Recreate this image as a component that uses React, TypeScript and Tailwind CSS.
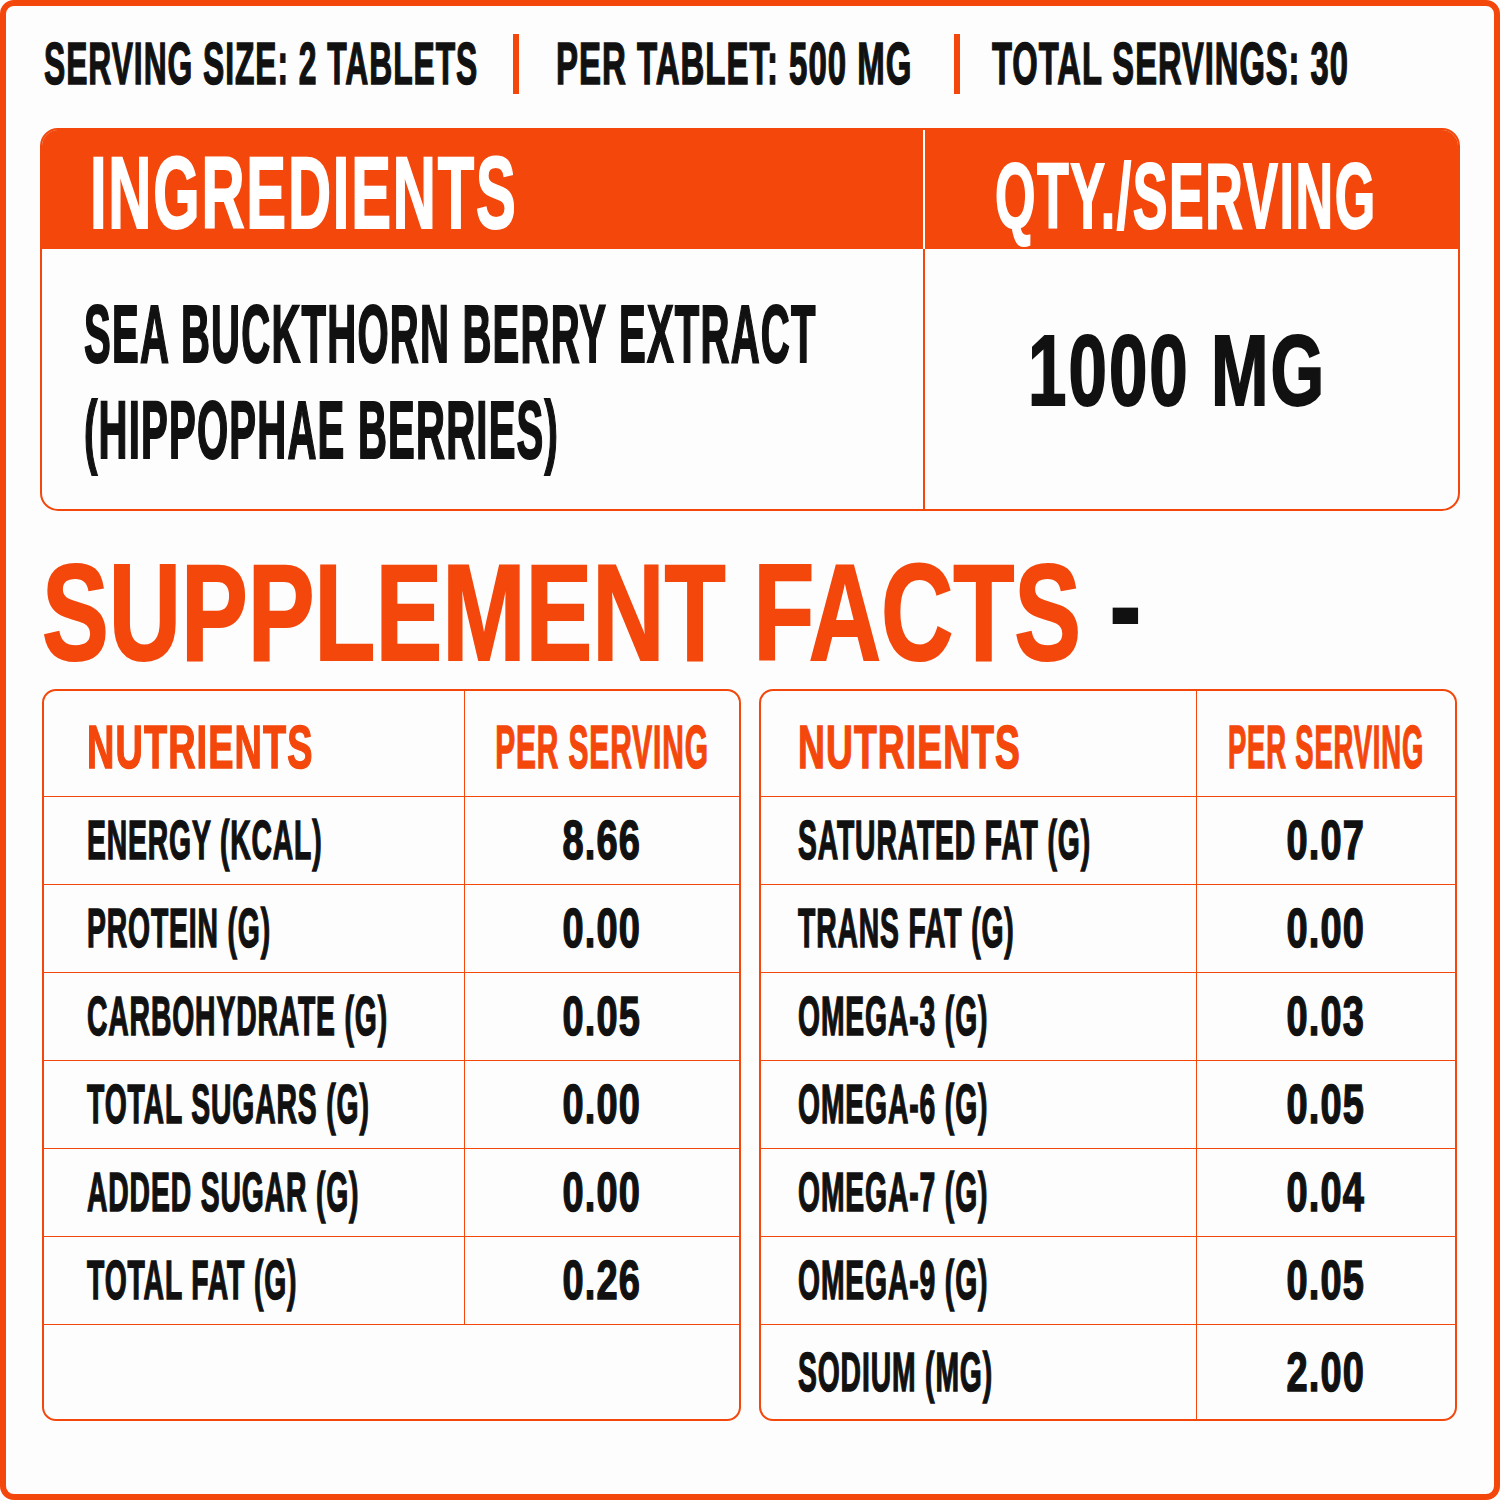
import React from 'react';

type Row = [string, string];

const leftRows: Row[] = [
  ['ENERGY (KCAL)', '8.66'],
  ['PROTEIN (G)', '0.00'],
  ['CARBOHYDRATE (G)', '0.05'],
  ['TOTAL SUGARS (G)', '0.00'],
  ['ADDED SUGAR (G)', '0.00'],
  ['TOTAL FAT (G)', '0.26'],
];

const rightRows: Row[] = [
  ['SATURATED FAT (G)', '0.07'],
  ['TRANS FAT (G)', '0.00'],
  ['OMEGA-3 (G)', '0.03'],
  ['OMEGA-6 (G)', '0.05'],
  ['OMEGA-7 (G)', '0.04'],
  ['OMEGA-9 (G)', '0.05'],
  ['SODIUM (MG)', '2.00'],
];

// condensed text: Liberation Sans squeezed on the x axis
const Sq: React.FC<{ className: string; children: React.ReactNode }> = ({ className, children }) => (
  <span className={`inline-block whitespace-nowrap leading-none tracking-[0.03em] ${className}`}>{children}</span>
);

interface TableProps {
  rows: Row[];
  cols: string;
  pad: string;
  nutScale: string;
  perScale: string;
}

const NutrientTable: React.FC<TableProps> = ({ rows, cols, pad, nutScale, perScale }) => {
  return (
    <div className="flex h-[732px] flex-col overflow-hidden rounded-[14px] border-2 border-[#f4470c]">
      <div className={`grid h-[106px] shrink-0 border-b-[1.5px] border-[#f4470c] ${cols}`}>
        <div className={`flex items-center border-r-[1.5px] border-[#f4470c] pt-[8px] ${pad}`}>
          <Sq className={`origin-left text-[61px] text-[#f4470c] [-webkit-text-stroke:1.5px_#f4470c] ${nutScale}`}>NUTRIENTS</Sq>
        </div>
        <div className="flex items-center justify-center pt-[8px]">
          <Sq className={`origin-center text-[61px] text-[#f4470c] [-webkit-text-stroke:1.5px_#f4470c] ${perScale}`}>PER SERVING</Sq>
        </div>
      </div>
      {rows.map(([label, value], i) => (
        <div
          key={label}
          className={`grid shrink-0 ${cols} ${i < 6 ? 'h-[88px] border-b-[1.5px] border-[#f4470c]' : 'flex-1'}`}
        >
          <div className={`flex items-center border-r-[1.5px] border-[#f4470c] ${pad}`}>
            <Sq className="origin-left scale-x-[0.515] text-[55px] text-[#111] [-webkit-text-stroke:1.5px_#111]">{label}</Sq>
          </div>
          <div className="flex items-center justify-center">
            <Sq className="origin-center scale-x-[0.69] text-[55px] text-[#111] [-webkit-text-stroke:1.5px_#111]">{value}</Sq>
          </div>
        </div>
      ))}
      {rows.length < 7 && <div className="flex-1" />}
    </div>
  );
};

const App: React.FC = () => {
  return (
    <div className="h-[1500px] w-[1500px] overflow-hidden bg-white">
      <div className="flex h-[1500px] w-[1500px] flex-col overflow-hidden rounded-[14px] border-[6px] border-[#f4470c] bg-[#fdfdfd] px-[34px] pt-[28px] font-['Liberation_Sans',Arial,sans-serif] font-bold">
        {/* serving info */}
        <div className="flex h-[60px] shrink-0 items-center pl-[4px] text-[#111] [-webkit-text-stroke:1.5px_#111]">
          <div className="w-[437px] shrink-0">
            <Sq className="origin-left scale-x-[0.53] text-[60px]">SERVING SIZE: 2 TABLETS</Sq>
          </div>
          <div className="ml-[32px] h-[60px] w-[6px] shrink-0 bg-[#f4470c]" />
          <div className="ml-[37px] w-[364px] shrink-0">
            <Sq className="origin-left scale-x-[0.55] text-[60px]">PER TABLET: 500 MG</Sq>
          </div>
          <div className="ml-[34px] h-[60px] w-[6px] shrink-0 bg-[#f4470c]" />
          <div className="ml-[32px] w-[364px] shrink-0">
            <Sq className="origin-left scale-x-[0.545] text-[60px]">TOTAL SERVINGS: 30</Sq>
          </div>
        </div>

        {/* ingredients */}
        <div className="mt-[34px] shrink-0 overflow-hidden rounded-[18px] border-2 border-[#f4470c]">
          <div className="grid h-[119px] grid-cols-[883px_minmax(0,1fr)] bg-[#f4470c] text-white [-webkit-text-stroke:2px_white]">
            <div className="overflow-hidden border-r-2 border-white pl-[48px] pt-[12px]">
              <Sq className="origin-left scale-x-[0.585] text-[102px]">INGREDIENTS</Sq>
            </div>
            <div className="flex justify-center pr-[12px] pt-[20px]">
              <Sq className="origin-center scale-x-[0.565] text-[92px]">QTY./SERVING</Sq>
            </div>
          </div>
          <div className="grid h-[260px] grid-cols-[883px_minmax(0,1fr)] text-[#111] [-webkit-text-stroke:2px_#111]">
            <div className="overflow-hidden border-r-2 border-[#f4470c] pl-[42px] pt-[37px]">
              <div className="origin-left scale-x-[0.495] whitespace-nowrap text-[81px] leading-[96px] tracking-[0.03em]">
                SEA BUCKTHORN BERRY EXTRACT
                <br />
                (HIPPOPHAE BERRIES)
              </div>
            </div>
            <div className="flex justify-center pr-[28px] pt-[71px]">
              <Sq className="origin-center scale-x-[0.69] text-[100px]">1000 MG</Sq>
            </div>
          </div>
        </div>

        {/* title */}
        <div className="mt-[33px] h-[137px] shrink-0 pl-[2px]">
          <span className="inline-block origin-left scale-x-[0.73] whitespace-nowrap text-[137px] leading-none text-[#f4470c] [-webkit-text-stroke:2px_#f4470c]">
            SUPPLEMENT FACTS{' '}
            <span className="inline-block -translate-y-[9px] text-[#111] [-webkit-text-stroke:0px_#111]">-</span>
          </span>
        </div>

        {/* nutrient tables */}
        <div className="ml-[2px] mr-[3px] mt-[8px] grid grid-cols-2 gap-[18px]">
          <NutrientTable
            rows={leftRows}
            cols="grid-cols-[421px_minmax(0,1fr)]"
            pad="pl-[43px]"
            nutScale="scale-x-[0.62]"
            perScale="scale-x-[0.49]"
          />
          <NutrientTable
            rows={rightRows}
            cols="grid-cols-[436px_minmax(0,1fr)]"
            pad="pl-[37px]"
            nutScale="scale-x-[0.61]"
            perScale="scale-x-[0.45]"
          />
        </div>
      </div>
    </div>
  );
};

export default App;
